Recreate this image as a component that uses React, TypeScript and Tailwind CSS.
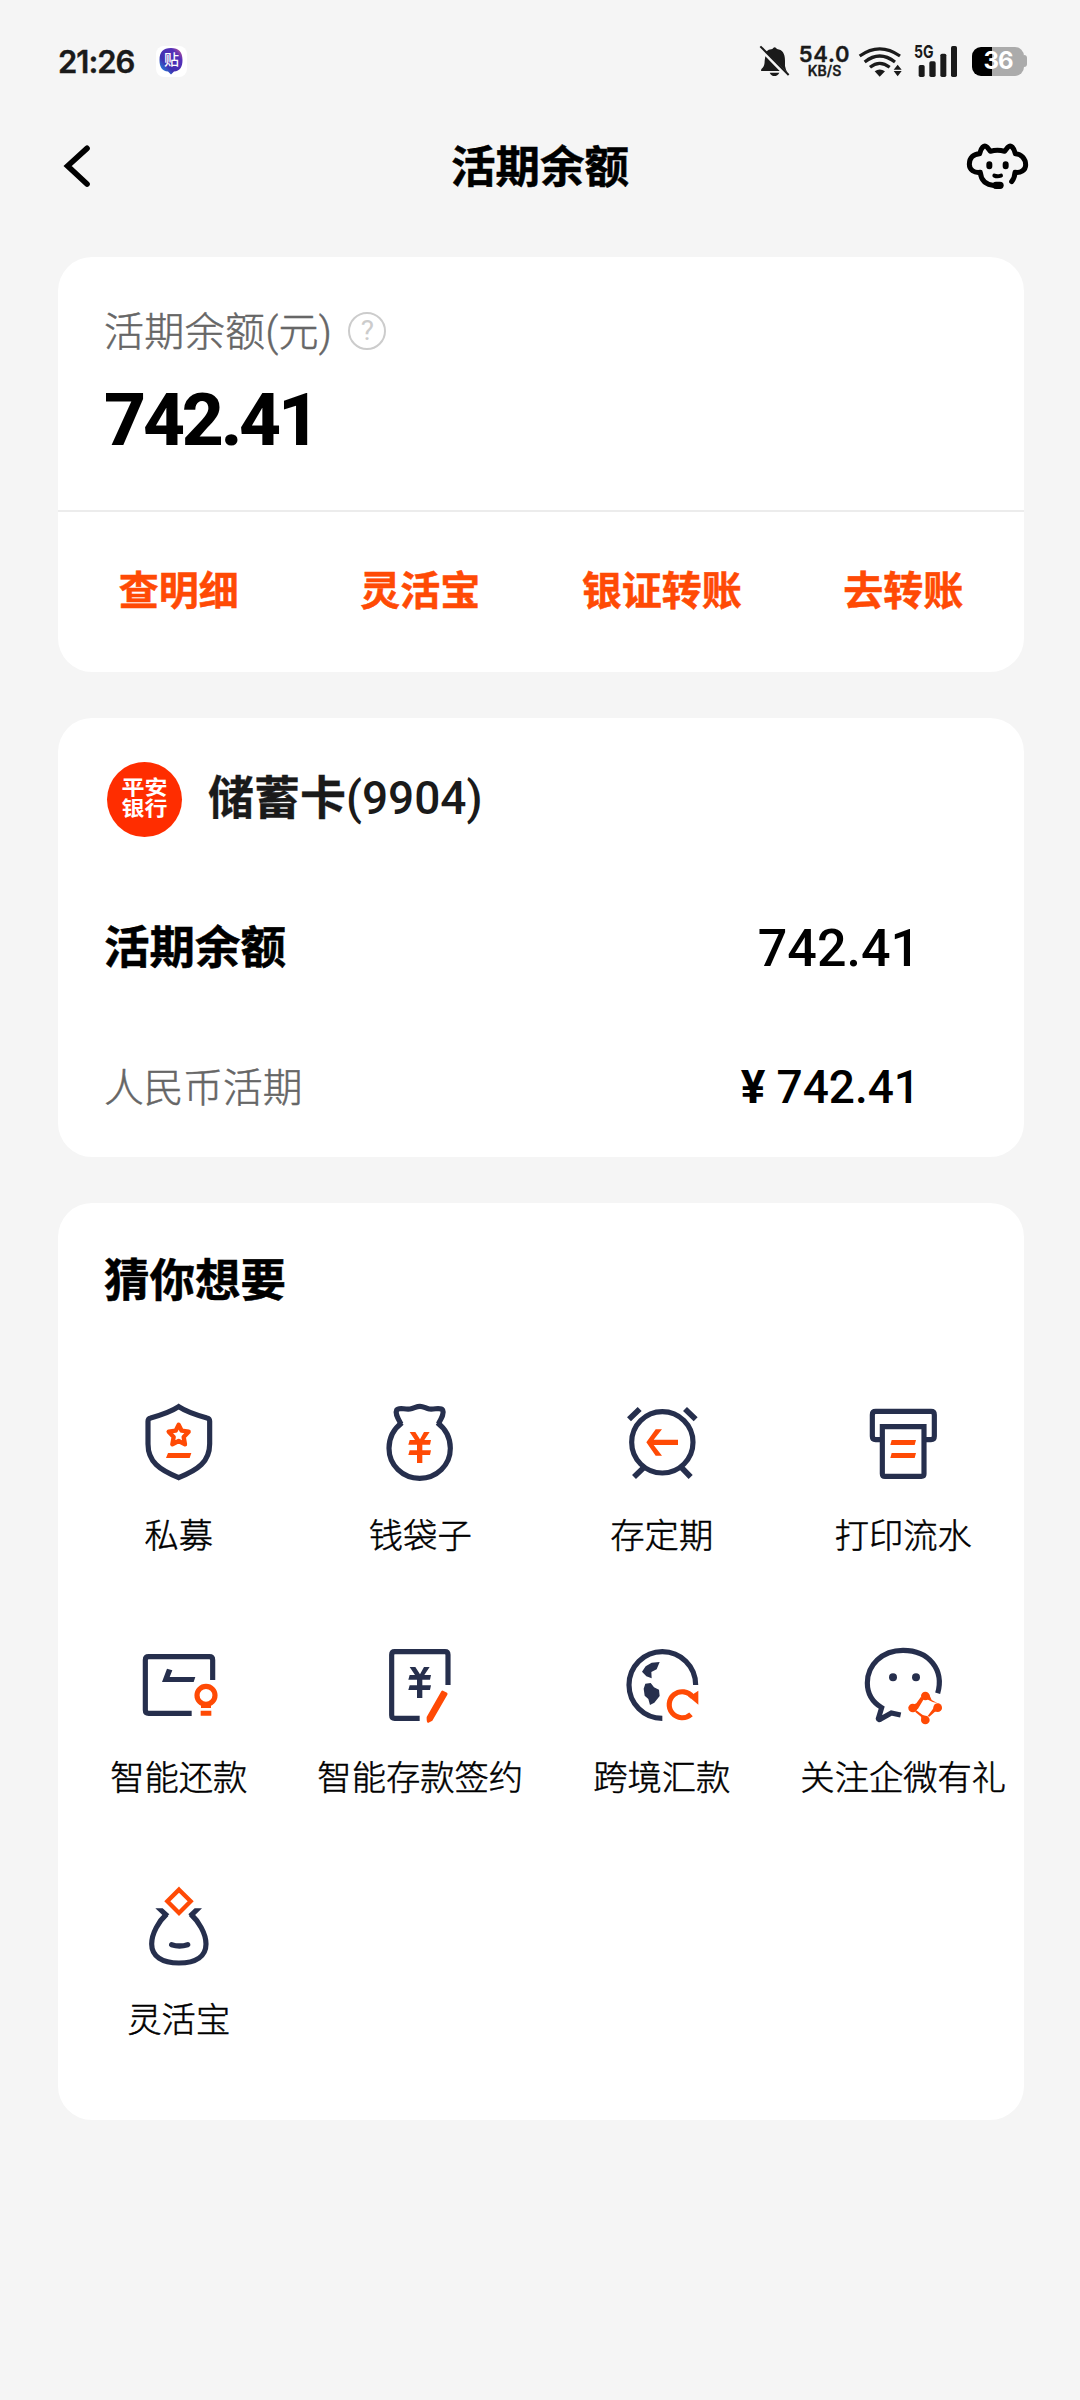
import type { ReactNode } from "react";

const NAVY = "#262f4d";
const ORANGE = "#ff4a05";
const INK = "#1a1a1a";

function Glyph({ box, children }: { box: string; children: ReactNode }) {
  return (
    <svg viewBox={box} className="size-24" fill="none" stroke={NAVY} strokeWidth="15.5">
      {children}
    </svg>
  );
}

const ShieldIcon = () => (
  <Glyph box="152 72 288 288">
    <path d="M295 110Q322 128 380 144Q388 146 388 154V222C388 276 352 300 295 323C238 300 203 276 203 222V154Q203 146 211 144Q268 128 295 110Z" />
    <path
      d="M295 164L304 182L325 185L310 201L314 223L295 213L276 223L280 201L265 185L286 182Z"
      stroke={ORANGE}
      strokeWidth="13"
      strokeLinejoin="round"
    />
    <path d="M263 249H333L328 264H257Z" fill={ORANGE} stroke="none" />
  </Glyph>
);

const Yen = ({ color, dy = 0 }: { color: string; dy?: number }) => (
  <g transform={`translate(0 ${dy})`} fill={color} stroke="none">
    <path d="M990 186H1007L1021 208L1033 186H1050L1034 210H1054L1051 224H1028V241H1054L1051 255H1028V279H1012V255H986L990 241H1012V224H986L990 210H1006Z" />
  </g>
);

const PouchIcon = () => (
  <Glyph box="877 72 288 288">
    <path
      d="M964 162C952 140 946 130 951 120C957 111 974 119 991 117C1003 115 1010 109 1021 109C1032 109 1038 115 1049 117C1066 119 1082 111 1089 120C1094 130 1087 142 1076 162"
      strokeLinejoin="round"
    />
    <path d="M967 158C942 177 928 206 928 235C928 286 969 325 1020 325C1071 325 1112 286 1112 235C1112 206 1098 177 1073 158" />
    <Yen color={ORANGE} />
  </Glyph>
);

const ClockIcon = () => (
  <Glyph box="161 72 288 288">
    <circle cx="306" cy="217" r="92" />
    <path d="M206 148L238 117M406 148L374 117" strokeWidth="17" />
    <path d="M252 291L221 321M362 291L391 321" strokeWidth="17" />
    <path d="M286 178H305L280 209H353V225H280L305 257H286L258 217Z" fill={ORANGE} stroke="none" />
  </Glyph>
);

const PrinterIcon = () => (
  <Glyph box="886 72 288 288">
    <path d="M962 209H948Q938 209 938 199V134Q938 124 948 124H1114Q1124 124 1124 134V199Q1124 209 1114 209H1099" />
    <path d="M968 170H1093V312Q1093 319 1085 319H976Q968 319 968 311Z" />
    <path d="M996 210H1069L1065 225H992ZM996 249H1069L1065 264H992Z" fill={ORANGE} stroke="none" />
  </Glyph>
);

const RepayIcon = () => (
  <Glyph box="152 78 288 288">
    <path d="M397 210V150Q397 140 387 140H205Q195 140 195 150V300Q195 310 205 310H334" />
    <path d="M260 176L276 181L268 201H345L340 216H245Z" fill={NAVY} stroke="none" />
    <circle cx="377" cy="256" r="27" stroke={ORANGE} />
    <path d="M362 282H392V294H362ZM361 302H393V317H361Z" fill={ORANGE} stroke="none" />
  </Glyph>
);

const SignIcon = () => (
  <Glyph box="877 78 288 288">
    <path d="M1105 225V134Q1105 125 1096 125H945Q936 125 936 134V316Q936 325 945 325H1020" />
    <Yen color={NAVY} dy={-15} />
    <path
      d="M1090 242L1102 248Q1105 251 1103 254L1058 332L1045 339Q1040 337 1041 321L1085 244Q1087 241 1090 242Z"
      fill={ORANGE}
      stroke="none"
    />
  </Glyph>
);

const GlobeIcon = () => (
  <Glyph box="161 78 288 288">
    <path d="M406 225A100 100 0 1 0 306 325" />
    <path
      d="M298 156L289 178L273 186L274 205L258 199L245 185L256 169L274 158ZM255 221L271 219L281 232L296 239L298 258L282 278L269 285L264 267L253 257L250 236Z"
      fill={NAVY}
      stroke="none"
    />
    <path d="M392 313A39 39 0 1 1 397 261" stroke={ORANGE} />
    <path d="M414 242V284L382 257L398 253Z" fill={ORANGE} stroke="none" />
  </Glyph>
);

const ChatIcon = () => (
  <Glyph box="886 78 288 288">
    <path
      d="M1134 250C1154 180 1109 121 1030 121C967 121 923 165 923 219C923 250 938 276 966 293L956 326Q957 331 963 327L995 309L1023 315"
    />
    <circle cx="1000" cy="202" r="12" fill={NAVY} stroke="none" />
    <circle cx="1069" cy="202" r="12" fill={NAVY} stroke="none" />
    <g fill={ORANGE} stroke="none">
      <circle cx="1097" cy="258" r="13" />
      <circle cx="1134" cy="293" r="13" />
      <circle cx="1097" cy="330" r="13" />
      <circle cx="1059" cy="294" r="13" />
      <path d="M1084 260L1070 280L1046 292L1062 307L1075 296L1092 268Z" />
      <path d="M1107 250L1116 270L1145 286L1135 280L1119 276L1102 268Z" />
      <path d="M1147 296L1125 306L1109 320L1104 318L1118 299L1129 283Z" />
      <path d="M1088 339L1084 320L1066 305L1070 301L1088 314L1104 320Z" />
    </g>
  </Glyph>
);

const PurseIcon = () => (
  <Glyph box="242 84 288 288">
    <path d="M349 192C326 213 304 250 304 282C304 319 335 339 386 339C437 339 467 319 467 282C467 250 444 213 421 192" />
    <path d="M315 175H337L357 193L345 203ZM455 175H433L414 193L426 203Z" fill={NAVY} stroke="none" />
    <path d="M386 119L421 154L386 189L351 154Z" stroke={ORANGE} strokeWidth="13" />
    <path d="M364 284Q387 292 412 284" strokeLinecap="round" strokeWidth="16" />
  </Glyph>
);

const services: { label: string; Icon: () => ReactNode }[] = [
  { label: "私募", Icon: ShieldIcon },
  { label: "钱袋子", Icon: PouchIcon },
  { label: "存定期", Icon: ClockIcon },
  { label: "打印流水", Icon: PrinterIcon },
  { label: "智能还款", Icon: RepayIcon },
  { label: "智能存款签约", Icon: SignIcon },
  { label: "跨境汇款", Icon: GlobeIcon },
  { label: "关注企微有礼", Icon: ChatIcon },
  { label: "灵活宝", Icon: PurseIcon },
];

const actions = ["查明细", "灵活宝", "银证转账", "去转账"];

function StatusBar() {
  return (
    <div className="flex h-[122px] items-center justify-between pl-[58px] pr-[53px] font-['Inter','Noto_Sans_CJK_SC',sans-serif] text-[#1a1a1a]">
      <div className="flex items-center">
        <span className="w-[98px] whitespace-nowrap text-[31px] font-semibold leading-none tracking-[-1px] [-webkit-text-stroke:0.4px]">21:26</span>
        <div className="relative flex size-[31px] items-center justify-center rounded-lg bg-white">
          <svg viewBox="0 0 31 31" className="absolute inset-0 size-full">
            <defs>
              <linearGradient id="sticker" x1="0" y1="1" x2="1" y2="0">
                <stop offset="0" stopColor="#18a8f0" />
                <stop offset="0.35" stopColor="#4030b0" />
                <stop offset="0.75" stopColor="#5530b8" />
                <stop offset="1" stopColor="#e06090" />
              </linearGradient>
            </defs>
            <path d="M15 2C23 2 26.500 6 26.500 14C26.500 21 24 25 18 25.500L15 28.500L12 25.500C6 25 3.500 21 3.500 14C3.500 6 7 2 15 2Z" fill="url(#sticker)" />
          </svg>
          <span className="relative -mt-1 text-[15px] font-medium leading-none text-white">贴</span>
        </div>
      </div>
      <div className="flex items-center">
        <svg viewBox="117 72 99 102" className="h-[34px] w-[33px]" fill={INK}>
          <path d="M141 95L206 158Q200 150 198 138V122C198 100 190 89 174 87Q167 76 160 87Q148 88 141 95Z" />
          <path d="M139 109L182 153H127Q124 149 131 143Q137 137 137 122Z" />
          <path d="M152 158H181Q176 168 166 168Q157 168 152 158Z" />
          <path d="M124 79L209 165" stroke={INK} strokeWidth="6" />
        </svg>
        <div className="ml-2 flex w-[51px] flex-col items-center leading-none">
          <span className="text-[22px] font-semibold leading-[18px] tracking-[0.7px] [-webkit-text-stroke:0.3px]">54.0</span>
          <span className="text-[14px] font-semibold leading-[15px] [-webkit-text-stroke:0.3px]">KB/S</span>
        </div>
        <svg viewBox="415 72 135 102" className="ml-2 h-[34px] w-[45px]" fill="none" stroke={INK} strokeWidth="9.5">
          <path d="M420 108Q480 65 541 108M435 126Q480 90 526 126M451 142Q480 118 510 142" />
          <path d="M465 154Q480 143 496 154L480 170Z" fill={INK} stroke="none" />
          <path d="M522 149L534 134L546 149ZM522 153H546L534 169Z" fill={INK} stroke="none" />
        </svg>
        <div className="relative ml-2.5 h-[34px] w-[46px]">
          <svg viewBox="580 72 138 102" className="size-full" fill={INK}>
            <rect x="597" y="135" width="18" height="36" rx="5" />
            <rect x="629" y="124" width="19" height="47" rx="5" />
            <rect x="662" y="101" width="18" height="70" rx="5" />
            <rect x="694" y="78" width="18" height="93" rx="5" />
          </svg>
          <span className="absolute left-px top-0 origin-left scale-x-[0.78] text-[18px] font-bold leading-4">5G</span>
        </div>
        <div className="ml-[13px] flex items-center">
          <div className="flex h-[29px] w-[52px] items-center justify-center rounded-[9px] bg-linear-to-r from-black from-[38%] to-[#ababab] to-[38%] text-[24px] font-bold leading-none tracking-[-1px] text-white">
            36
          </div>
          <div className="h-3 w-[3px] rounded-r-sm bg-[#ababab]" />
        </div>
      </div>
    </div>
  );
}

function TopBar() {
  return (
    <header className="flex h-[88px] items-center justify-between pl-[62px] pr-[50px]">
      <svg viewBox="185 367 90 138" className="mr-[23px] h-[46px] w-[30px]" fill="none" stroke="#000" strokeWidth="17" strokeLinecap="round">
        <path d="M260 383L202 436L260 490" />
      </svg>
      <h1 className="pt-1 text-[44.500px] font-bold leading-none [-webkit-text-stroke:0.5px]">活期余额</h1>
      <svg viewBox="735 360 195 150" className="h-[50px] w-[65px]" fill="none" stroke="#000" strokeWidth="15" strokeLinecap="round" strokeLinejoin="round">
        <path d="M825 494C798 492 783 478 781 454C763 457 748 447 748 430C748 408 762 399 779 398C783 380 792 370 801 378L811 391Q832 385 854 391L864 378C873 370 882 380 886 398C903 399 917 412 917 432C917 447 902 457 885 454Q884 471 875 482" />
        <path d="M808 430V436M857 430V436" strokeWidth="18" />
        <path d="M823 464Q832 468 843 464" strokeWidth="12" />
        <path d="M828 493H840" strokeWidth="22" />
      </svg>
    </header>
  );
}

export default function App() {
  return (
    <div className="min-h-[2400px] w-[1080px] bg-[#f5f5f5] font-['Roboto','Noto_Sans_CJK_SC',sans-serif] text-black">
      <StatusBar />
      <TopBar />
      <main className="ml-[58px] mt-[47px] flex w-[966px] flex-col gap-[46px]">
        <section className="h-[415px] rounded-[34px] bg-white pt-[44px]">
          <div className="flex h-[60px] items-center px-[46px]">
            <span className="pt-[3px] text-[40px] font-light leading-none tracking-[0.35px] text-[#666] [-webkit-text-stroke:0.5px]">活期余额(元)</span>
            <span className="ml-4 flex size-[38px] items-center justify-center rounded-full border-2 border-[#ccc] text-[28px] leading-none text-[#ccc]">
              ?
            </span>
          </div>
          <div className="mt-[18px] flex h-20 items-center px-[46px] pt-[3px] text-[73px] font-extrabold leading-none tracking-[-3.200px]">742.41</div>
          <div className="mt-[51px] grid h-[162px] grid-cols-4 items-center border-t-2 border-[#ececec] text-center text-[40px] font-bold leading-none text-[#ff4a05] [-webkit-text-stroke:0.5px]">
            {actions.map((a) => (
              <span key={a}>{a}</span>
            ))}
          </div>
        </section>

        <section className="h-[439px] rounded-[34px] bg-white pl-[46px] pr-[104px] pt-[41px]">
          <div className="flex h-20 items-center">
            <div className="ml-[3px] flex size-[75px] items-center justify-center rounded-full bg-[#ff2d00] text-white">
              <div className="flex scale-y-[0.88] flex-col text-[23px] font-bold leading-[24px]">
                <span>平安</span>
                <span>银行</span>
              </div>
            </div>
            <div className="ml-[26px] pb-[3px] text-[46px] leading-none text-[#1a1a1a]">
              <span className="font-bold [-webkit-text-stroke:0.3px]">储蓄卡</span>
              <span className="font-medium">(9904)</span>
            </div>
          </div>
          <div className="mt-[68px] flex h-20 items-center justify-between pt-[3px] leading-none">
            <span className="text-[45.500px] font-bold [-webkit-text-stroke:0.5px]">活期余额</span>
            <span className="text-[52px] font-medium">742.41</span>
          </div>
          <div className="mt-[60px] flex h-20 items-center justify-between leading-none">
            <span className="pt-[3px] text-[39.700px] font-light text-[#666] [-webkit-text-stroke:0.5px]">人民币活期</span>
            <span className="flex items-baseline gap-[11px] text-[46px] font-medium">
              <span className="font-bold">¥</span>
              <span>742.41</span>
            </span>
          </div>
        </section>

        <section className="h-[917px] rounded-[34px] bg-white pt-[36px]">
          <h2 className="flex h-20 items-center px-[46px] pt-1.5 text-[45.500px] font-bold leading-none [-webkit-text-stroke:0.5px]">猜你想要</h2>
          <div className="mt-[75px] grid grid-cols-4">
            {services.map(({ label, Icon }) => (
              <div key={label} className="flex h-[242px] flex-col items-center">
                <Icon />
                <span className="mt-[21px] flex h-[50px] items-center whitespace-nowrap text-[34.300px] font-light leading-none [-webkit-text-stroke:0.5px]">{label}</span>
              </div>
            ))}
          </div>
        </section>
      </main>
    </div>
  );
}
